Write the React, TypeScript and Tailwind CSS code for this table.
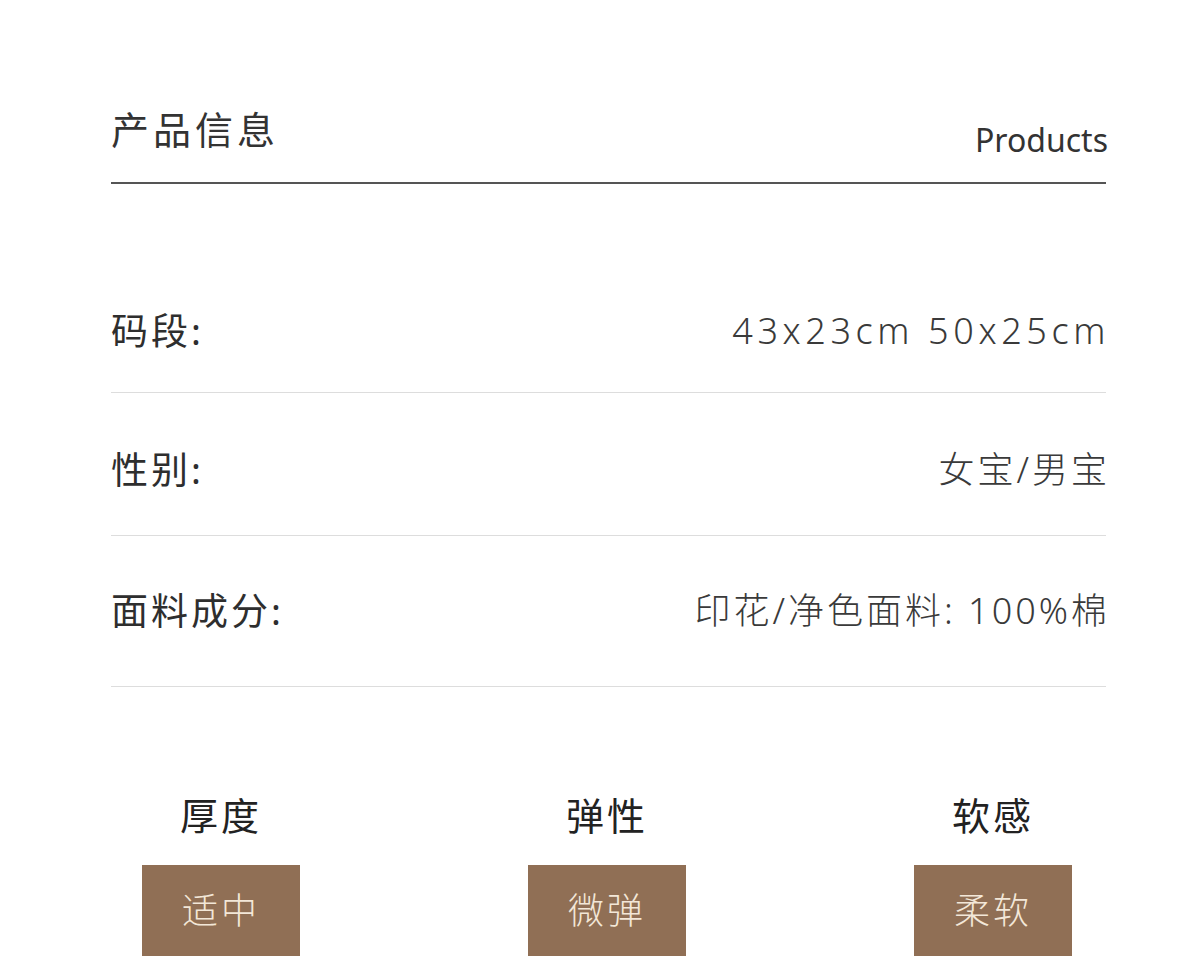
const rows = [
  { label: '码段:', value: '43x23cm 50x25cm', h: 'h-[124px]', track: 'tracking-[4.6px]' },
  { label: '性别:', value: '女宝/男宝', h: 'h-[143px] pt-[12px]', track: 'tracking-[3px]' },
  { label: '面料成分:', value: '印花/净色面料: 100%棉', h: 'h-[151px]', track: 'tracking-[3px]' },
];

const traits = [
  { title: '厚度', level: '适中' },
  { title: '弹性', level: '微弹' },
  { title: '软感', level: '柔软' },
];

export default function App() {
  return (
    <div
      className="w-[1200px] h-[960px] overflow-hidden bg-white text-[#333]"
      style={{ fontFamily: '"Noto Sans", "Noto Sans CJK SC", sans-serif' }}
    >
      <div className="ml-[111px] w-[995px] pt-[110px]">
        <header className="flex items-end justify-between border-b-2 border-[#555] pb-[34px]">
          <h1 className="text-[38px] leading-none tracking-[4px] font-normal">产品信息</h1>
          <span className="text-[32px] leading-none font-normal mb-[-8px] mr-[-2px]">Products</span>
        </header>

        <div className="mt-[85px]">
          {rows.map((r) => (
            <div
              key={r.label}
              className={`flex items-center justify-between border-b border-[#ddd] ${r.h}`}
            >
              <span className="text-[37px] font-normal tracking-[3px] text-[#2e2e2e]">{r.label}</span>
              <span className={`text-[36px] font-light text-[#3a3a3a] mr-[-4px] ${r.track}`}>{r.value}</span>
            </div>
          ))}
        </div>
      </div>

      <div className="ml-[28px] mt-[109px] flex">
        {traits.map((t) => (
          <div key={t.title} className="w-[386px] flex flex-col items-center">
            <h2 className="text-[38px] leading-none font-normal tracking-[3px] text-[#222]">{t.title}</h2>
            <div className="mt-[31px] w-[158px] h-[91px] bg-[#906f55] flex items-center justify-center">
              <span className="text-[36px] font-light tracking-[3px] text-[#f3e7d8]">{t.level}</span>
            </div>
          </div>
        ))}
      </div>
    </div>
  );
}
